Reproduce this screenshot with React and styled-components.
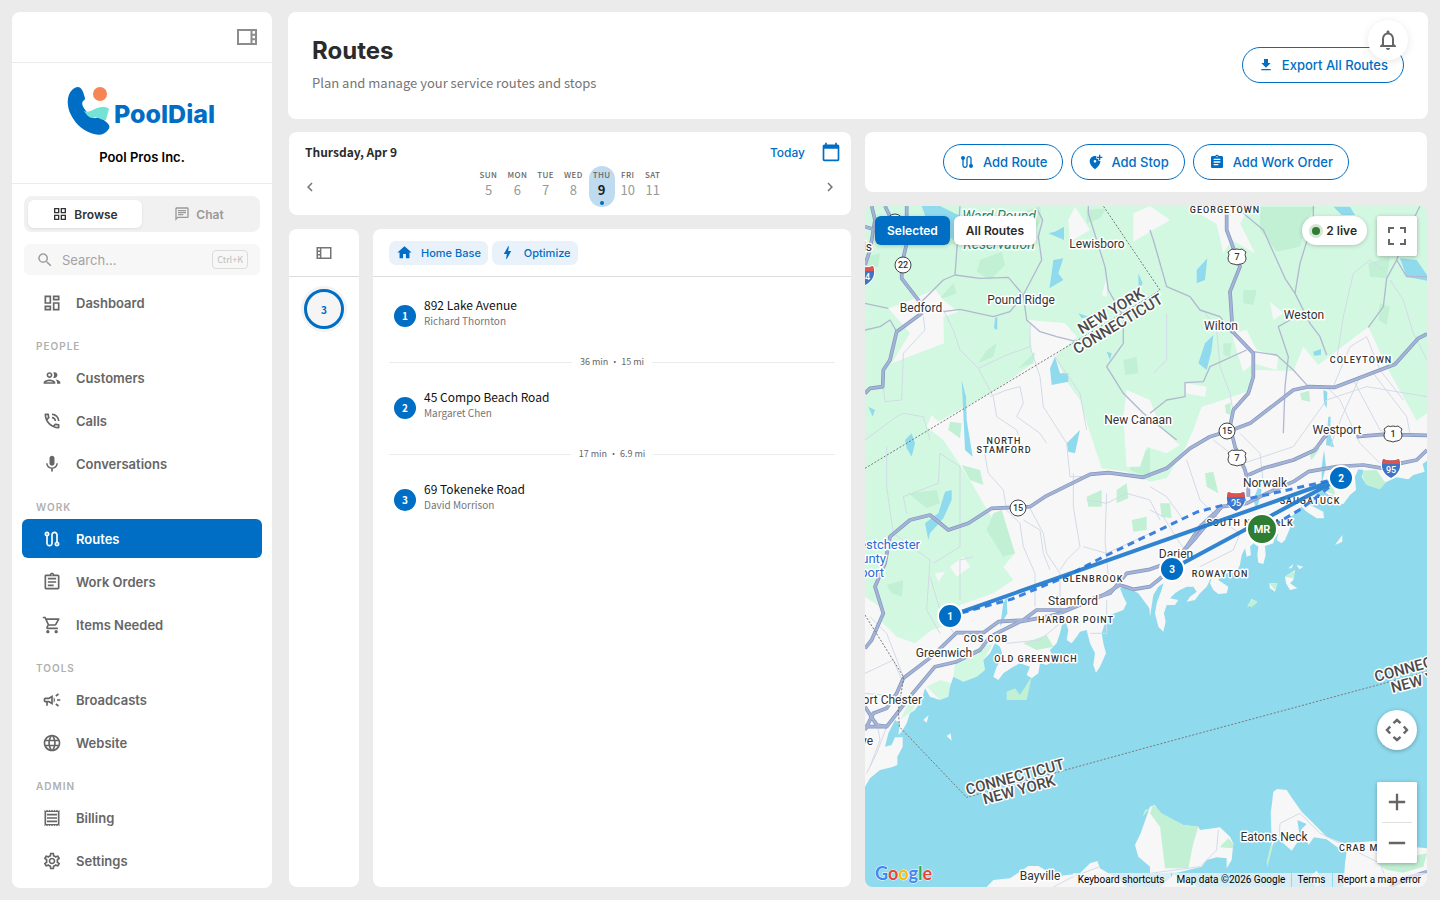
import { useState } from 'react';
import styled, { createGlobalStyle, css } from 'styled-components';
import {
  MdOutlineViewSidebar,
  MdOutlineGridView,
  MdOutlineChat,
  MdSearch,
  MdOutlineDashboard,
  MdOutlineGroup,
  MdOutlinePhoneInTalk,
  MdMic,
  MdOutlineRoute,
  MdRoute,
  MdOutlineAssignment,
  MdAssignment,
  MdOutlineShoppingCart,
  MdOutlineCampaign,
  MdLanguage,
  MdOutlineReceipt,
  MdOutlineSettings,
  MdOutlineNotifications,
  MdDownload,
  MdCalendarToday,
  MdChevronLeft,
  MdChevronRight,
  MdHome,
  MdBolt,
  MdAddLocationAlt,
  MdAdd,
  MdRemove,
} from 'react-icons/md';

const BLUE = '#006ec4';
const SANS = "'Inter', 'Roboto', sans-serif";
const SOURCE = "'Noto Sans CJK SC', 'Noto Sans', sans-serif";

const GlobalStyle = createGlobalStyle`
  *, *::before, *::after {
    box-sizing: border-box;
  }

  body {
    margin: 0;
    background: #ebebeb;
    color: #2b2b2b;
    font-family: ${SANS};
  }

  button, input {
    font-family: inherit;
  }

  button {
    cursor: pointer;
  }

  h1, p, ul, ol {
    margin: 0;
    padding: 0;
  }

  ul, ol {
    list-style: none;
  }
`;

const Page = styled.div`
  display: flex;
  gap: 16px;
  min-height: 100vh;
  padding: 12px;
`;

const Card = styled.section`
  background: #fff;
  border-radius: 8px;
`;

/* ---------- sidebar ---------- */

const Sidebar = styled.aside`
  flex: 0 0 260px;
  min-width: 0;
  background: #fff;
  border-radius: 8px;
`;

const SidebarTop = styled.div`
  display: flex;
  justify-content: flex-end;
  align-items: center;
  height: 51px;
  padding: 0 13px;
  border-bottom: 1px solid #ebebeb;
`;

const IconButton = styled.button`
  display: inline-flex;
  align-items: center;
  justify-content: center;
  padding: 0;
  border: 0;
  background: none;
  color: ${props => props.$color || '#757575'};
  font-size: ${props => props.$size || 20}px;

  svg {
    transform: ${props => (props.$flip ? 'scaleX(-1)' : 'none')};
  }
`;

const Brand = styled.div`
  display: flex;
  flex-direction: column;
  align-items: center;
  gap: 10px;
  height: 121px;
  padding-top: 24px;
  border-bottom: 1px solid #ebebeb;
`;

const BrandName = styled.p`
  color: #000;
  font-size: 13px;
  font-weight: 600;
  line-height: 20px;
`;

const SidebarBody = styled.div`
  padding: 12px 10px 8px;
`;

const ModeSwitch = styled.div`
  display: flex;
  height: 36px;
  margin: 0 2px 12px;
  padding: 4px;
  background: #f1f1f1;
  border-radius: 8px;
`;

const ModeButton = styled.button`
  flex: 1 1 0;
  display: flex;
  align-items: center;
  justify-content: center;
  gap: 6px;
  padding: 0;
  border: 0;
  border-radius: 6px;
  background: ${props => (props.$active ? '#fff' : 'transparent')};
  box-shadow: ${props => (props.$active ? '0 1px 3px rgba(0, 0, 0, 0.08)' : 'none')};
  color: ${props => (props.$active ? '#333' : '#999')};
  font-size: 12px;
  font-weight: 600;

  svg {
    width: 16px;
    height: 16px;
  }
`;

const SearchBox = styled.label`
  display: flex;
  align-items: center;
  gap: 8px;
  height: 31px;
  margin: 0 2px 8px;
  padding: 0 12px;
  background: #f7f7f7;
  border-radius: 6px;
  color: #9e9e9e;

  svg {
    flex: none;
    width: 18px;
    height: 18px;
  }

  input {
    flex: 1;
    min-width: 0;
    padding: 0;
    border: 0;
    outline: 0;
    background: none;
    font-size: 13px;
  }

  input::placeholder {
    color: #a3a3a3;
  }

  kbd {
    padding: 0 4px;
    border: 1px solid #dcdcdc;
    border-radius: 4px;
    color: #bdbdbd;
    font-family: ${SOURCE};
    font-size: 9px;
    line-height: 17px;
  }
`;

const NavList = styled.ul`
  display: flex;
  flex-direction: column;
  gap: 4px;
`;

const NavHeading = styled.p`
  margin: 17px 14px 5px;
  color: #b0b0b0;
  font-size: 10px;
  font-weight: 600;
  letter-spacing: 1px;
  line-height: 14px;
`;

const NavLink = styled.a`
  display: flex;
  align-items: center;
  gap: 14px;
  height: 39px;
  padding: 0 20px;
  border-radius: 6px;
  background: ${props => (props.$active ? BLUE : 'transparent')};
  color: ${props => (props.$active ? '#fff' : '#666')};
  font-size: 13px;
  font-weight: 600;
  text-decoration: none;

  svg {
    width: 20px;
    height: 20px;
  }
`;

/* ---------- main column ---------- */

const Main = styled.main`
  flex: 1;
  min-width: 0;
  display: flex;
  flex-direction: column;
  gap: 13px;
`;

const Header = styled(Card)`
  display: flex;
  align-items: center;
  justify-content: space-between;
  padding: 24px 24px 26px;
`;

const Title = styled.h1`
  margin-bottom: 7px;
  font-size: 24px;
  font-weight: 700;
  line-height: 30px;
`;

const Subtitle = styled.p`
  color: #757575;
  font-family: ${SOURCE};
  font-size: 13px;
  line-height: 20px;
`;

const OutlineButton = styled.button`
  display: inline-flex;
  align-items: center;
  gap: 8px;
  height: 36px;
  padding: 0 15px;
  border: 1px solid ${BLUE};
  border-radius: 18px;
  background: #fff;
  color: ${BLUE};
  font-size: 13px;
  font-weight: 500;
  white-space: nowrap;

  svg {
    width: 16px;
    height: 16px;
  }
`;

const BellButton = styled.button`
  position: fixed;
  top: 20px;
  right: 32px;
  z-index: 5;
  display: flex;
  align-items: center;
  justify-content: center;
  width: 40px;
  height: 40px;
  border: 0;
  border-radius: 50%;
  background: #fff;
  box-shadow: 0 2px 8px rgba(0, 0, 0, 0.1);
  color: #666;
  font-size: 24px;
`;

const Columns = styled.div`
  flex: 1;
  display: grid;
  grid-template-columns: 1fr 1fr;
  gap: 14px;
  padding: 0 1px 1px;
`;

const Column = styled.div`
  display: flex;
  flex-direction: column;
  gap: 14px;
  min-width: 0;
`;

const DateBar = styled(Card)`
  display: flex;
  flex-direction: column;
  gap: 2px;
  padding: 8px 10px 8px 16px;
  font-family: ${SOURCE};
`;

const DateTop = styled.div`
  display: flex;
  align-items: center;
  height: 24px;
`;

const DateTitle = styled.p`
  flex: 1;
  padding-bottom: 2px;
  font-size: 12px;
  font-weight: 700;
`;

const TextButton = styled.button`
  margin-right: 16px;
  padding: 0;
  border: 0;
  background: none;
  color: ${BLUE};
  font-family: ${SANS};
  font-size: 12px;
  font-weight: 500;
`;

const WeekRow = styled.div`
  display: flex;
  align-items: center;
  justify-content: space-between;
  margin: 0 2px 0 -4px;
`;

const Week = styled.div`
  display: flex;
  gap: 2px;
`;

const Day = styled.button`
  display: flex;
  flex-direction: column;
  align-items: center;
  height: 41px;
  padding: 3px 4px 0;
  border: 0;
  border-radius: 13px;
  background: ${props => (props.$active ? '#bfdbf0' : 'transparent')};
  font-family: ${SOURCE};

  span {
    color: #666;
    font-size: 8px;
    font-weight: 500;
    letter-spacing: 0.05em;
    line-height: 12px;
  }

  strong {
    color: ${props => (props.$active ? '#1c1c1c' : '#999')};
    font-size: 13px;
    font-weight: ${props => (props.$active ? 700 : 400)};
    line-height: 18px;
  }

  ${props => props.$active && css`
    &::after {
      content: '';
      width: 4px;
      height: 4px;
      margin-top: 2px;
      border-radius: 50%;
      background: ${BLUE};
    }
  `}
`;

const RouteArea = styled.div`
  flex: 1;
  display: grid;
  grid-template-columns: 70px 1fr;
  gap: 14px;
`;

const PanelHead = styled.div`
  display: flex;
  align-items: center;
  justify-content: ${props => (props.$center ? 'center' : 'flex-start')};
  gap: 4px;
  height: 48px;
  padding: 0 16px;
  border-bottom: 1px solid #dedede;
`;

const RouteBadge = styled.button`
  display: block;
  width: 40px;
  height: 40px;
  margin: 12px auto;
  padding: 0;
  border: 3px solid ${BLUE};
  border-radius: 50%;
  background: #f5f5f5;
  box-shadow: 0 0 0 3px #f3f3f3;
  color: ${BLUE};
  font-family: ${SOURCE};
  font-size: 10px;
  font-weight: 700;
`;

const Chip = styled.button`
  display: inline-flex;
  align-items: center;
  gap: 8px;
  height: 24px;
  padding: 0 7px;
  border: 0;
  border-radius: 7px;
  background: #e9f2fa;
  color: ${BLUE};
  font-size: 11px;
  font-weight: 500;

  svg {
    width: 17px;
    height: 17px;
  }
`;

const StopList = styled.ol`
  padding: 20px 16px;
  font-family: ${SOURCE};
`;

const Stop = styled.li`
  display: flex;
  align-items: center;
  gap: 8px;
  padding: 0 5px;
`;

const StopNumber = styled.span`
  width: 22px;
  height: 22px;
  border-radius: 50%;
  background: ${BLUE};
  color: #fff;
  font-size: 10px;
  font-weight: 700;
  line-height: 21px;
  text-align: center;
`;

const StopText = styled.div`
  padding-bottom: 6px;
  line-height: 16px;

  p {
    font-size: 12px;
    color: #111;
  }

  p + p {
    color: #757575;
    font-size: 10px;
  }
`;

const Leg = styled.li`
  display: flex;
  align-items: center;
  gap: 8px;
  margin: 19px 0;
  color: #666;
  font-size: 9px;
  line-height: 16px;

  &::before, &::after {
    content: '';
    flex: 1;
    height: 1px;
    background: #ebebeb;
  }
`;

const Actions = styled(Card)`
  display: flex;
  align-items: center;
  justify-content: center;
  gap: 8px;
  padding: 12px;
`;

/* ---------- map ---------- */

const MapFrame = styled.section`
  position: relative;
  flex: 1;
  min-height: 400px;
  overflow: hidden;
  border-radius: 8px;
  background: #90daee;

  > svg {
    position: absolute;
    inset: 0;
    width: 100%;
    height: 100%;
  }
`;

const MapTop = styled.div`
  position: absolute;
  top: 10px;
  left: 10px;
  right: 10px;
  display: flex;
  align-items: flex-start;
  gap: 4px;
`;

const MapTab = styled.button`
  height: 29px;
  padding: 0 12px;
  border: 0;
  border-radius: 6px;
  background: ${props => (props.$active ? BLUE : '#fff')};
  box-shadow: 0 1px 4px rgba(0, 0, 0, 0.2);
  color: ${props => (props.$active ? '#fff' : '#2b2b2b')};
  font-size: 12px;
  font-weight: 600;
`;

const LivePill = styled.div`
  display: flex;
  align-items: center;
  gap: 6px;
  height: 29px;
  margin-left: auto;
  margin-right: 6px;
  padding: 0 10px;
  border-radius: 15px;
  background: #fff;
  box-shadow: 0 1px 4px rgba(0, 0, 0, 0.2);
  font-size: 12px;
  font-weight: 600;

  &::before {
    content: '';
    width: 8px;
    height: 8px;
    border-radius: 50%;
    background: #2e7d32;
    box-shadow: 0 0 0 3px #d5e5d6;
  }
`;

const MapButton = styled.button`
  display: flex;
  align-items: center;
  justify-content: center;
  width: 40px;
  height: 40px;
  padding: 0;
  border: 0;
  border-radius: ${props => (props.$round ? '50%' : '2px')};
  background: #fff;
  color: #666;
  font-size: 28px;
  box-shadow: ${props => (props.$flat ? 'none' : '0 1px 4px rgba(0, 0, 0, 0.3)')};
`;

const MapControls = styled.div`
  position: absolute;
  right: 10px;
  bottom: 24px;
  display: flex;
  flex-direction: column;
  gap: 32px;
`;

const ZoomGroup = styled.div`
  background: #fff;
  border-radius: 2px;
  box-shadow: 0 1px 4px rgba(0, 0, 0, 0.3);

  hr {
    width: 30px;
    height: 1px;
    margin: 0 auto;
    border: 0;
    background: #e0e0e0;
  }
`;

const GoogleLogo = styled.a`
  position: absolute;
  left: 10px;
  bottom: 1px;
  font-family: 'Lato', sans-serif;
  font-size: 18px;
  font-weight: 700;
  line-height: 26px;
  text-decoration: none;
  -webkit-text-stroke: 1px #fff;
  paint-order: stroke fill;
`;

const Letter = styled.span`
  color: ${props => props.$color};
`;

const Attribution = styled.div`
  position: absolute;
  right: 0;
  bottom: 0;
  display: flex;
  gap: 1px;
  font-family: 'Roboto', sans-serif;
  font-size: 10px;
  line-height: 14px;
  color: #000;

  button, a, span {
    padding: 0 6px 0 5px;
    border: 0;
    background: rgba(245, 245, 245, 0.7);
    color: #000;
    font-size: 10px;
    line-height: 14px;
    font-family: inherit;
    text-decoration: none;
    white-space: nowrap;
  }
`;

const green = [
  // main woodland block, New York side through Weston
  '15,18 1701,18 1701,640 1670,662 1585,510 1525,380 1375,495 1330,440 1300,513 1180,510 1160,575 1060,610 1025,620 1000,690 975,745 920,835 870,845 800,815 725,805 690,700 660,600 620,545 585,470 650,410 615,370 505,360 520,490 390,580 235,665 215,645 200,680 250,720 290,780 330,840 370,910 400,960 440,990 465,1060 430,1100 460,1140 400,1180 300,1215 290,1270 215,1290 165,1330 110,1310 65,1265 75,1230 15,1190',
  '285,1390 340,1350 400,1330 370,1380 375,1410 350,1430 310,1445 280,1430',
  '200,1460 240,1440 275,1450 265,1490 240,1500',
  '120,1560 150,1500 180,1490 160,1530',
];

const clearings = [
  '85,325 130,310 225,268 250,300 295,335 250,350 252,430 95,490 150,400',
  '725,285 740,235 740,290',
  '1000,30 1070,72 1090,160 1115,120 1185,160 1140,70 1170,18 1000,18',
  '1115,400 1160,390 1190,450 1255,470 1250,510 1180,490 1150,515',
  '800,570 870,600 900,680 960,735 920,760 860,740 840,800 800,800 790,650',
  '820,40 870,18 930,60 870,95 820,125',
  '975,550 1040,560 1035,590 975,580',
  '1230,305 1270,340 1240,360',
  '270,1100 310,1070 330,1100 290,1130',
  '225,1120 255,1115 235,1145',
  '625,60 645,20 690,90 630,125',
];

const parks = [
  '360,180 425,155 435,195 390,240 350,215',
  '480,40 540,18 545,60 520,90',
  '1200,20 1370,20 1340,60 1320,140 1250,155 1200,90',
  '235,300 280,250 290,280',
  '380,450 410,430 400,470 355,490',
  '475,505 525,455 520,490',
  '790,480 830,470 835,520 795,525',
  '270,665 305,670 300,715 265,690',
  '305,795 360,810 370,855 330,840',
  '145,880 230,870 240,910 200,925',
  '400,940 425,930 465,1060 430,1070 380,990',
  '80,1155 130,1140 125,1190 95,1180',
  '680,890 725,870 725,920 685,920',
  '770,870 800,850 805,895 770,910',
  '815,960 860,950 860,990 820,995',
  '820,775 870,745 870,835 810,810',
  '680,30 740,25 720,55 680,70',
  '1150,270 1190,270 1180,315 1150,310',
  '1525,190 1590,170 1580,235 1530,230',
  '1560,310 1590,320 1580,375 1555,360',
  '1090,430 1115,430 1110,470 1090,465',
  '1035,820 1060,815 1075,880 1040,860',
  '900,910 930,910 935,955 905,950',
  '1360,740 1380,745 1355,780 1350,770',
  '1500,812 1550,810 1570,840 1580,850 1560,868 1520,855',
  '1370,862 1420,850 1425,885 1390,870',
  '250,90 290,85 300,130 260,135',
  '490,1330 560,1305 580,1340 530,1350',
  '20,170 60,160 55,200 20,205',
  '1320,580 1348,572 1350,605 1325,600',
  '1095,615 1112,608 1112,645 1098,640',
];

const coast = '1701,782 1688,792 1694,815 1660,825 1645,838 1610,832 1580,845 1560,868 1520,855 1505,830 1510,810 1495,808 1485,830 1488,870 1470,885 1450,912 1430,910 1425,888 1405,885 1390,870 1365,885 1340,895 1350,915 1390,935 1392,955 1370,955 1340,935 1325,920 1310,930 1300,945 1285,955 1290,985 1275,1020 1265,1030 1250,1020 1255,1000 1245,1010 1240,1030 1215,1038 1217,1065 1210,1092 1195,1088 1192,1065 1195,1040 1180,1030 1170,1040 1173,1065 1160,1070 1155,1045 1145,1065 1140,1095 1132,1110 1110,1120 1085,1120 1075,1140 1105,1160 1100,1180 1075,1182 1060,1170 1050,1150 1060,1120 1040,1160 1020,1180 1005,1200 980,1205 990,1190 1010,1175 1000,1160 980,1160 960,1170 945,1180 930,1195 955,1200 945,1215 920,1215 912,1240 917,1265 910,1295 895,1280 885,1240 890,1210 905,1170 910,1150 895,1160 880,1185 870,1250 868,1225 850,1200 835,1180 800,1160 780,1165 790,1190 800,1210 790,1230 750,1245 735,1270 725,1300 730,1330 738,1360 720,1400 708,1418 700,1395 705,1360 690,1330 680,1290 660,1295 650,1310 635,1330 620,1320 625,1290 612,1250 600,1300 590,1330 570,1350 580,1380 560,1395 540,1390 535,1420 515,1435 500,1425 510,1400 480,1390 460,1400 430,1420 415,1440 400,1430 410,1400 430,1370 420,1340 405,1330 390,1360 370,1380 375,1410 350,1430 310,1445 280,1430 270,1460 265,1490 240,1500 210,1490 195,1465 185,1500 165,1530 150,1540 140,1570 125,1595 115,1605 120,1570 105,1560 85,1600 75,1640 95,1635 105,1612 128,1612 128,1640 112,1670 112,1695 95,1702 60,1710 30,1735 15,1760 15,2061 1701,2061';

const ponds = [
  '185,18 240,18 325,60 325,110 280,120 200,60',
  '585,95 612,80 612,120 565,100',
  '580,180 610,175 595,220 610,240 568,265 575,220',
  '570,505 585,470 600,520 625,520 625,545 575,555',
  '305,540 318,590 320,660 338,770 315,750 310,640',
  '135,720 155,700 165,730 155,770 140,745',
  '255,875 275,870 275,900 250,955 210,1000 205,1020 195,970 235,940',
  '620,730 660,690 645,760 625,755',
  '1010,210 1042,175 1035,240 1010,250',
  '1035,430 1060,405 1055,450 1040,510 1015,490',
  '1420,20 1470,20 1485,45 1445,45',
  '1620,175 1670,180 1701,225 1701,242 1640,230',
  '1360,455 1383,447 1383,465 1362,467',
  '1390,570 1402,575 1400,625 1392,610',
  '1405,650 1412,650 1410,700 1422,742 1398,735',
  '405,355 412,350 412,390 402,385',
  '740,455 755,460 750,480',
  '655,340 685,350 665,355',
  '1385,800 1392,750 1398,800 1385,850',
  '430,1210 440,1190 442,1240 420,1280',
  '835,220 848,250 836,270',
  '1195,860 1205,870 1190,930 1180,900',
  '25,620 45,630 38,650',
];

const islands = [
  '1425,1035 1447,1005 1447,1025',
  '1285,1105 1300,1092 1295,1105',
  '1310,1095 1330,1100 1318,1108',
  '1275,1130 1305,1110 1300,1140 1290,1150 1312,1165 1290,1170 1278,1150',
  '1228,1150 1252,1150 1245,1175 1230,1165',
  '1162,1220 1175,1197 1192,1205',
  '190,1560 206,1545 200,1568',
  '260,1608 272,1600 275,1622',
  // Bayville shore
  '380,2061 400,2040 450,2035 480,2015 505,1998 535,1998 560,2012 600,2028 660,2020 690,1990 712,1983 720,2005 780,2040 800,2061',
  // Lloyd Neck
  '870,1820 885,1815 900,1840 970,1875 1015,1880 1020,1890 1080,1882 1110,1910 1120,1930 1115,1980 1100,2005 1100,1975 1070,1972 1040,1980 1025,2000 950,2018 870,2020 870,2000 835,1970 825,1935 842,1900',
  '900,2061 940,2025 990,2030 1010,2061',
  // Eatons Neck
  '1236,1810 1240,1775 1252,1767 1280,1770 1300,1800 1325,1835 1360,1870 1400,1910 1450,1930 1560,1922 1600,1935 1701,1945 1701,2061 1450,2061 1455,1990 1460,1955 1430,1940 1400,1918 1362,1912 1345,1935 1340,1905 1322,1890 1340,1872 1312,1860 1318,1900 1343,1905 1310,1930 1295,1952 1270,1930 1248,1912 1236,1940 1232,1840',
  '1345,2035 1370,2012 1390,2045 1370,2061',
];

const shoreParks = [
  '880,1813 905,1840 970,1875 1015,1880 1000,1930 985,2005 915,2005 900,1880 870,1840',
  '1085,1935 1105,1915 1120,1930 1118,1945 1080,1942',
  '1235,1925 1237,1945 1222,2000 1220,1985',
  '1550,1990 1701,1960 1690,2000 1630,2018 1580,2010',
  '1162,1215 1178,1198 1192,1207 1175,1222',
  '1275,1130 1305,1112 1300,1135',
  '1228,1150 1252,1150 1245,1170',
  '855,1830 870,1825 848,1850',
  '440,1475 465,1465 480,1485 515,1430 500,1500 440,1500',
];

const majorRoads = [
  '15,1345 35,1320 70,1240 45,1160 75,1090 90,1010 150,960 210,945 265,990 325,970 395,925 510,920 555,890 690,823 745,818 850,832 920,805 990,745 1050,710 1130,685 1170,670 1300,570 1345,560 1425,562 1605,493 1675,415 1701,402',
  '1100,30 1100,90 1115,130 1140,200 1110,275 1118,395 1180,460 1180,530 1165,580 1120,630 1110,680 1125,740 1155,810 1165,850 1165,890',
  '1701,750 1670,780 1620,790 1570,805 1510,795 1430,800 1345,815 1300,845 1220,880 1160,910 1085,920 1020,980 980,1040 950,1080 870,1108 800,1120 750,1180 700,1195 620,1230 530,1230 490,1260 415,1265 370,1298 290,1298 215,1370 130,1435 110,1480 80,1525 40,1540 15,1590',
  '1085,920 1010,1010 965,1060 930,1110 895,1140 870,1160 820,1168 780,1155 730,1185 600,1240 560,1250 480,1265 390,1310 360,1350 290,1385 225,1400 150,1490 80,1580 15,1580',
  '15,1520 50,1575 80,1580',
  '1165,825 1210,805 1300,780 1365,750 1390,715 1400,705',
  '1490,710 1570,703 1701,706',
  '140,18 140,130 125,195 125,235 175,300 185,340 110,395 90,480 70,510 68,560 30,565 15,580',
  '15,195 30,150 45,60 35,18',
  '75,18 95,60 80,100 15,80',
  '1590,2061 1640,2035 1701,2015',
];

const midRoads = [
  '180,310 250,240 285,225 300,18',
  '285,225 360,235 445,232 490,285 545,180 535,110 548,60 530,25',
  '250,335 300,328 400,350 450,335 490,285 500,360 540,395 590,410 650,425',
  '685,18 685,40 735,200 745,270 790,350 790,430 740,500 790,580 850,640 950,720',
  '870,90 880,120 920,260 990,290 1020,330 1080,350 1115,400',
  '1150,40 1210,90 1275,235 1305,280 1320,190 1360,60 1360,18',
  '1305,280 1350,370 1380,410 1400,465',
  '1305,340 1290,360 1255,380 1285,470 1275,560 1270,700',
  '1701,230 1640,230 1610,180 1580,235 1570,320 1525,382',
  '1610,180 1640,100 1680,18',
  '1180,455 1250,465 1300,510 1345,560',
  '870,640 920,600 975,590 975,548 1030,545 1050,500 1160,450',
  '15,390 60,380 90,360 110,395',
  '15,310 60,320 85,325',
];

const minorRoads = [
  '250,330 280,390 300,450 355,505 400,590 410,650 470,690 480,720',
  '355,505 440,465 510,440 510,370',
  '190,350 195,390 130,460 125,600 75,605 70,560',
  '15,720 110,650 130,640 190,650 210,720',
  '390,590 440,570 480,560 490,610 470,650 540,700 560,730',
  '510,440 540,530 550,620 620,730 630,830 690,830',
  '585,470 660,580 680,690',
  '80,740 80,860 100,1000 210,1080 200,1230 240,1300',
  '240,760 235,850 130,890 140,940',
  '240,760 300,800 300,1040 220,1090',
  '340,1070 300,1080 300,1200',
  '370,740 385,820 430,870 440,930 480,970 490,1040 525,1120 525,1220',
  '510,925 550,1000 560,1060 600,1120 600,1240',
  '490,960 540,990 550,1060 570,1110',
  '640,820 640,920 660,1040 620,1080 600,1110',
  '680,900 740,910 800,880 870,900 900,960',
  '740,880 735,1020 745,1130',
  '670,1040 740,1060 870,1000',
  '870,930 910,950 960,1030 1000,1080',
  '870,860 920,890 970,960',
  '980,780 1020,900 1080,960 1140,1000 1120,1050 1020,1100',
  '1060,720 1150,790 1300,740 1400,600 1520,560 1701,590',
  '1400,560 1440,600 1500,730 1560,790',
  '1480,540 1560,690 1620,720',
  '1540,520 1640,650 1650,700',
  '1420,560 1470,440 1520,410 1560,510 1630,600',
  '1410,740 1450,640 1500,530',
  '1430,480 1450,350 1480,220 1530,180 1570,210',
  '1590,240 1630,300 1660,400 1701,480',
  '920,340 920,480 880,520',
  '1030,330 1070,390 1080,500 1110,580 1120,640',
  '1140,700 1200,760 1210,850',
  '30,1250 80,1300 130,1430',
  '15,1420 100,1380 130,1450',
  '15,1480 120,1490',
  '50,1560 60,1620 30,1700',
  '80,1580 50,1660 20,1720',
  '740,1200 740,1300 690,1300',
  '440,1330 540,1320 600,1270',
  '1320,1840 1260,1870 1258,1910',
  '1320,1840 1380,1900 1450,1935 1560,1990 1580,2040',
  '580,2061 640,2030 720,2000',
  '870,2020 1020,2000 1070,1950 1075,1890',
  '280,1298 240,1230 210,1130',
];

const borders = [
  '15,805 870,290 900,270 730,18',
  '15,1245 130,1430 130,1440 115,1530 118,1580 320,1792 870,1640 1701,1415',
];

const towns = [
  ['Lewisboro', 232, 42], ['Bedford', 56, 106], ['Pound Ridge', 156, 98], ['Wilton', 356, 124],
  ['Weston', 439, 113], ['New Canaan', 273, 218], ['Westport', 472, 228], ['Norwalk', 400, 281],
  ['Darien', 311, 352], ['Stamford', 208, 399], ['Greenwich', 79, 451], ['Eatons Neck', 409, 635],
  ['Bayville', 175, 674],
];

const districts = [
  ['GEORGETOWN', 360, 7], ['COLEYTOWN', 496, 157], ['NORTH', 139, 238], ['STAMFORD', 139, 247],
  ['SAUGATUCK', 445, 298], ['SOUTH NORWALK', 385, 320], ['ROWAYTON', 355, 371], ['GLENBROOK', 228, 376],
  ['HARBOR POINT', 211, 417], ['COS COB', 121, 436], ['OLD GREENWICH', 171, 456],
];

const pins = [
  { label: '1', x: 85, y: 410 },
  { label: '2', x: 476, y: 272 },
  { label: '3', x: 307, y: 363 },
];

const MapText = styled.text`
  font-family: 'Roboto', sans-serif;
  font-size: 12px;
  fill: #333;
  stroke: #fff;
  stroke-width: 3px;
  stroke-linejoin: round;
  paint-order: stroke;
  text-anchor: ${props => props.$anchor || 'middle'};

  ${props => props.$kind === 'district' && css`
    font-size: 9px;
    font-weight: 500;
    letter-spacing: 1px;
  `}

  ${props => props.$kind === 'state' && css`
    font-size: 15px;
    font-weight: 500;
    fill: #4a4a4a;
  `}

  ${props => props.$kind === 'park' && css`
    font-size: 14px;
    font-style: italic;
    fill: #1f8a66;
  `}

  ${props => props.$kind === 'airport' && css`
    font-size: 13px;
    fill: #2b6cd4;
  `}
`;

const PinText = styled.text`
  font-family: 'Roboto', sans-serif;
  font-size: ${props => props.$size}px;
  font-weight: 700;
  fill: #fff;
  text-anchor: middle;
`;

const ShieldText = styled.text`
  font-family: 'Roboto', sans-serif;
  font-size: 9px;
  font-weight: 500;
  fill: ${props => props.$color || '#333'};
  text-anchor: middle;
`;

const RoundShield = ({ x, y, label }) => (
  <g transform={`translate(${x} ${y})`}>
    <circle r="8" fill="#fff" stroke="#444" />
    {label && <ShieldText y="3">{label}</ShieldText>}
  </g>
);

const UsShield = ({ x, y, label }) => (
  <g transform={`translate(${x} ${y})`}>
    <path
      d="M-5-8Q-3-7 0-8Q3-7 5-8L9-5Q7-3 9 1Q9 6 4 7Q2 7 0 8Q-2 7-4 7Q-9 6-9 1Q-7-3-9-5Z"
      fill="#fff"
      stroke="#444"
    />
    <ShieldText y="3">{label}</ShieldText>
  </g>
);

const InterstateShield = ({ x, y, label }) => (
  <g transform={`translate(${x} ${y})`}>
    <path d="M-8-9Q0-6 8-9C11-1 8 6 0 10C-8 6-11-1-8-9Z" fill="#3f74c4" stroke="#fff" strokeWidth="2" paintOrder="stroke" />
    <path d="M-8-9Q0-6 8-9L9-4H-9Z" fill="#e0524d" />
    <ShieldText y="5" $color="#fff">{label}</ShieldText>
  </g>
);

const Lines = ({ items, color, width, ...rest }) => (
  <g fill="none" stroke={color} strokeWidth={width} strokeLinejoin="round" {...rest}>
    {items.map(points => <polyline key={points} points={points} />)}
  </g>
);

const Shapes = ({ items, color }) => (
  <g fill={color}>
    {items.map(points => <polygon key={points} points={points} />)}
  </g>
);

const MapDrawing = () => (
  <svg viewBox="0 0 562 681" preserveAspectRatio="xMidYMid slice" role="img" aria-label="Route map">
    <g transform="scale(0.33333) translate(-15 -18)">
      <rect x="15" y="18" width="1686" height="2043" fill="#f7f7f8" />
      <Shapes items={green} color="#d3f8e2" />
      <Shapes items={parks} color="#c2f0d4" />
      <Shapes items={clearings} color="#f7f7f8" />
      <polygon points={coast} fill="#90daee" />
      <Shapes items={ponds} color="#90daee" />
      <Shapes items={islands} color="#f7f7f8" />
      <Shapes items={shoreParks} color="#c2f0d4" />
      <Lines items={minorRoads} color="#d3dae6" width="3" />
      <Lines items={midRoads} color="#b1b9d0" width="4" />
      <Lines items={majorRoads} color="#8495be" width="11" />
      <Lines items={majorRoads} color="#a4b4d6" width="7" />
      <Lines items={borders} color="#777" width="3" strokeDasharray="6 5" />
    </g>

    {towns.map(([name, x, y]) => <MapText key={name} x={x} y={y}>{name}</MapText>)}
    {districts.map(([name, x, y]) => (
      <MapText key={name} x={x} y={y} $kind="district">{name}</MapText>
    ))}
    <MapText x="474" y="645" $kind="district" $anchor="start">CRAB MEADOW</MapText>
    <MapText x="57" y="498" $anchor="end">Port Chester</MapText>
    <MapText x="8" y="539" $anchor="end">Rye</MapText>
    <MapText x="7" y="45" $anchor="end">Bedford Hills</MapText>
    <MapText x="134" y="15" $kind="park">Ward Pound</MapText>
    <MapText x="134" y="43" $kind="park">Reservation</MapText>
    <MapText x="55" y="343" $kind="airport" $anchor="end">Westchester</MapText>
    <MapText x="21" y="357" $kind="airport" $anchor="end">County</MapText>
    <MapText x="19" y="371" $kind="airport" $anchor="end">Airport</MapText>
    <g transform="translate(246 105) rotate(-31)">
      <MapText y="5" $kind="state">NEW YORK</MapText>
    </g>
    <g transform="translate(253 118) rotate(-31)">
      <MapText y="5" $kind="state">CONNECTICUT</MapText>
    </g>
    <g transform="translate(150 571) rotate(-15)">
      <MapText y="5" $kind="state">CONNECTICUT</MapText>
    </g>
    <g transform="translate(154 584) rotate(-15)">
      <MapText y="5" $kind="state">NEW YORK</MapText>
    </g>
    <g transform="translate(511 476) rotate(-15)">
      <MapText y="0" $kind="state" $anchor="start">CONNECTICUT</MapText>
      <MapText x="13" y="15" $kind="state" $anchor="start">NEW YORK</MapText>
    </g>

    <RoundShield x={38} y={59} label="22" />
    <RoundShield x={30} y={16} />
    <RoundShield x={362} y={225} label="15" />
    <RoundShield x={153} y={302} label="15" />
    <UsShield x={372} y={51} label="7" />
    <UsShield x={372} y={252} label="7" />
    <UsShield x={528} y={228} label="1" />
    <InterstateShield x={526} y={262} label="95" />
    <InterstateShield x={371} y={295} label="95" />
    <InterstateShield x={0} y={69} label="84" />

    <g fill="none" strokeLinejoin="round">
      <path d="M85 410L147 393L200 371L240 350L332 306L378 294L476 272L436 303L397 326" stroke="#3b82e0" strokeWidth="3" strokeDasharray="7 5" />
      <path d="M85 410L476 272L307 363" stroke="#1f7acc" strokeWidth="4" strokeOpacity="0.92" />
    </g>
    {pins.map(pin => (
      <g key={pin.label} transform={`translate(${pin.x} ${pin.y})`}>
        <circle r="12" fill={BLUE} stroke="#fff" strokeWidth="2" />
        <PinText y="4" $size={10}>{pin.label}</PinText>
      </g>
    ))}
    <g transform="translate(397 323)">
      <circle r="15" fill="#2e7d32" stroke="#fff" strokeWidth="2" />
      <PinText y="4" $size={11}>MR</PinText>
    </g>
  </svg>
);

const LogoText = styled.text`
  font-family: ${SANS};
  font-size: 25px;
  font-weight: 800;
  fill: ${BLUE};
`;

const Logo = () => (
  <svg width="150" height="50" viewBox="0 0 150 50" role="img" aria-label="PoolDial">
    <path
      d="M11 0C14 0 16 4 17 8C18 11 19 12 16 14C14 17 16 20 19 24C22 28 26 32 29 31C33 29 35 31 38 34C42 37 44 40 41 43C38 47 33 49 27 47C18 45 9 38 4 28C-1 18 0 8 5 3C7 1 9 0 11 0Z"
      fill={BLUE}
    />
    <circle cx="33" cy="7" r="7" fill="#f58653" />
    <path d="M17 24C23 27 28 20 35 20C38 20 40 20 42 22L39 33C34 34 31 28 25 31C22 31 19 27 17 24Z" fill="#74e3d6" />
    <LogoText x="47" y="36">PoolDial</LogoText>
  </svg>
);

const navGroups = [
  { items: [{ label: 'Dashboard', icon: MdOutlineDashboard }] },
  {
    heading: 'PEOPLE',
    items: [
      { label: 'Customers', icon: MdOutlineGroup },
      { label: 'Calls', icon: MdOutlinePhoneInTalk },
      { label: 'Conversations', icon: MdMic },
    ],
  },
  {
    heading: 'WORK',
    items: [
      { label: 'Routes', icon: MdOutlineRoute },
      { label: 'Work Orders', icon: MdOutlineAssignment },
      { label: 'Items Needed', icon: MdOutlineShoppingCart },
    ],
  },
  {
    heading: 'TOOLS',
    items: [
      { label: 'Broadcasts', icon: MdOutlineCampaign },
      { label: 'Website', icon: MdLanguage },
    ],
  },
  {
    heading: 'ADMIN',
    items: [
      { label: 'Billing', icon: MdOutlineReceipt },
      { label: 'Settings', icon: MdOutlineSettings },
    ],
  },
];

const days = [
  ['SUN', 5], ['MON', 6], ['TUE', 7], ['WED', 8], ['THU', 9], ['FRI', 10], ['SAT', 11],
];

const stops = [
  { address: '892 Lake Avenue', customer: 'Richard Thornton', leg: '36 min · 15 mi' },
  { address: '45 Compo Beach Road', customer: 'Margaret Chen', leg: '17 min · 6.9 mi' },
  { address: '69 Tokeneke Road', customer: 'David Morrison' },
];

const googleLetters = [
  ['G', '#4285f4'], ['o', '#ea4335'], ['o', '#fbbc04'], ['g', '#4285f4'], ['l', '#34a853'], ['e', '#ea4335'],
];

const App = () => {
  const [mode, setMode] = useState('Browse');
  const [day, setDay] = useState(9);
  const [mapTab, setMapTab] = useState('Selected');

  return (
    <>
      <GlobalStyle />
      <Page>
        <Sidebar>
          <SidebarTop>
            <IconButton aria-label="Collapse sidebar" $size={24} $color="#8c8c8c">
              <MdOutlineViewSidebar />
            </IconButton>
          </SidebarTop>
          <Brand>
            <Logo />
            <BrandName>Pool Pros Inc.</BrandName>
          </Brand>
          <SidebarBody>
            <ModeSwitch>
              <ModeButton $active={mode === 'Browse'} onClick={() => setMode('Browse')}>
                <MdOutlineGridView />
                Browse
              </ModeButton>
              <ModeButton $active={mode === 'Chat'} onClick={() => setMode('Chat')}>
                <MdOutlineChat />
                Chat
              </ModeButton>
            </ModeSwitch>
            <SearchBox>
              <MdSearch />
              <input type="search" placeholder="Search..." aria-label="Search" />
              <kbd>Ctrl+K</kbd>
            </SearchBox>
            <nav>
              {navGroups.map(group => (
                <div key={group.heading || 'top'}>
                  {group.heading && <NavHeading>{group.heading}</NavHeading>}
                  <NavList>
                    {group.items.map(({ label, icon: Icon }) => (
                      <li key={label}>
                        <NavLink href={`#${label}`} $active={label === 'Routes'}>
                          <Icon />
                          {label}
                        </NavLink>
                      </li>
                    ))}
                  </NavList>
                </div>
              ))}
            </nav>
          </SidebarBody>
        </Sidebar>

        <Main>
          <Header>
            <div>
              <Title>Routes</Title>
              <Subtitle>Plan and manage your service routes and stops</Subtitle>
            </div>
            <OutlineButton>
              <MdDownload />
              Export All Routes
            </OutlineButton>
          </Header>
          <BellButton aria-label="Notifications">
            <MdOutlineNotifications />
          </BellButton>

          <Columns>
            <Column>
              <DateBar>
                <DateTop>
                  <DateTitle>Thursday, Apr 9</DateTitle>
                  <TextButton onClick={() => setDay(9)}>Today</TextButton>
                  <IconButton aria-label="Pick a date" $color={BLUE}>
                    <MdCalendarToday />
                  </IconButton>
                </DateTop>
                <WeekRow>
                  <IconButton aria-label="Previous week" $size={18}><MdChevronLeft /></IconButton>
                  <Week>
                    {days.map(([name, number]) => (
                      <Day key={name} $active={number === day} onClick={() => setDay(number)}>
                        <span>{name}</span>
                        <strong>{number}</strong>
                      </Day>
                    ))}
                  </Week>
                  <IconButton aria-label="Next week" $size={18}><MdChevronRight /></IconButton>
                </WeekRow>
              </DateBar>
              <RouteArea>
                <Card>
                  <PanelHead $center>
                    <IconButton aria-label="Expand route list" $size={18} $flip>
                      <MdOutlineViewSidebar />
                    </IconButton>
                  </PanelHead>
                  <RouteBadge>3</RouteBadge>
                </Card>
                <Card>
                  <PanelHead>
                    <Chip><MdHome />Home Base</Chip>
                    <Chip><MdBolt />Optimize</Chip>
                  </PanelHead>
                  <StopList>
                    {stops.map((stop, index) => [
                      <Stop key={stop.address}>
                        <StopNumber>{index + 1}</StopNumber>
                        <StopText>
                          <p>{stop.address}</p>
                          <p>{stop.customer}</p>
                        </StopText>
                      </Stop>,
                      stop.leg && <Leg key={stop.leg}>{stop.leg}</Leg>,
                    ])}
                  </StopList>
                </Card>
              </RouteArea>
            </Column>

            <Column>
              <Actions>
                <OutlineButton><MdRoute />Add Route</OutlineButton>
                <OutlineButton><MdAddLocationAlt />Add Stop</OutlineButton>
                <OutlineButton><MdAssignment />Add Work Order</OutlineButton>
              </Actions>
              <MapFrame>
                <MapDrawing />
                <MapTop>
                  {['Selected', 'All Routes'].map(tab => (
                    <MapTab key={tab} $active={tab === mapTab} onClick={() => setMapTab(tab)}>{tab}</MapTab>
                  ))}
                  <LivePill>2 live</LivePill>
                  <MapButton aria-label="Fullscreen">
                    <svg width="18" height="18" viewBox="0 0 18 18" fill="currentColor">
                      <path d="M0 0v6h2V2h4V0zm16 0h-4v2h4v4h2V0zm0 16h-4v2h6v-6h-2zM2 12H0v6h6v-2H2z" />
                    </svg>
                  </MapButton>
                </MapTop>
                <MapControls>
                  <MapButton $round aria-label="Map camera controls">
                    <svg width="24" height="24" viewBox="0 0 24 24" fill="none" stroke="currentColor" strokeWidth="2.4">
                      <path d="M8.5 5.2L12 2l3.5 3.2M8.5 18.8L12 22l3.5-3.2M5.2 8.5L2 12l3.2 3.5M18.8 8.5L22 12l-3.2 3.5" />
                    </svg>
                  </MapButton>
                  <ZoomGroup>
                    <MapButton $flat aria-label="Zoom in"><MdAdd /></MapButton>
                    <hr />
                    <MapButton $flat aria-label="Zoom out"><MdRemove /></MapButton>
                  </ZoomGroup>
                </MapControls>
                <GoogleLogo href="#google" aria-label="Google">
                  {googleLetters.map(([letter, color], index) => (
                    <Letter key={index} $color={color}>{letter}</Letter>
                  ))}
                </GoogleLogo>
                <Attribution>
                  <button>Keyboard shortcuts</button>
                  <span>Map data ©2026 Google</span>
                  <a href="#terms">Terms</a>
                  <a href="#report">Report a map error</a>
                </Attribution>
              </MapFrame>
            </Column>
          </Columns>
        </Main>
      </Page>
    </>
  );
};

export default App;
